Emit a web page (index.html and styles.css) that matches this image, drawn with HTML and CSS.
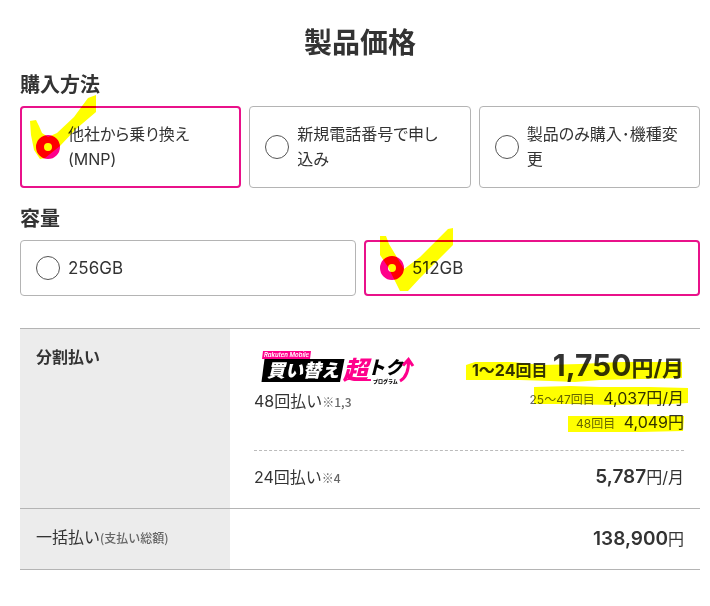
FILE: index.html
```html
<!DOCTYPE html>
<html lang="ja">
<head>
<meta charset="utf-8">
<meta name="viewport" content="width=device-width, initial-scale=1">
<title>製品価格</title>
<link rel="stylesheet" href="styles.css">
</head>
<body>
<main class="page">
  <h1 class="title">製品価格</h1>

  <fieldset class="group">
    <legend class="group-title">購入方法</legend>
    <div class="options">
      <label class="option">
        <input class="radio" type="radio" name="method" checked>
        <span class="option-text">他社から乗り換え<wbr>(MNP)</span>
        <svg class="check" viewBox="20 90 84 80" width="84" height="80" aria-hidden="true"><path d="M30 121 L36 120 L39 126 L42 133 L48 137 L57 133 L74 117 L88 98 L96 95 V112 L76 129 L60 146 L45 158 L40 159 L34 150 L31 135Z"/></svg>
      </label>
      <label class="option">
        <input class="radio" type="radio" name="method">
        <span class="option-text">新規電話番号で申し込み</span>
      </label>
      <label class="option">
        <input class="radio" type="radio" name="method">
        <span class="option-text">製品のみ購入･機種変更</span>
      </label>
    </div>
  </fieldset>

  <fieldset class="group">
    <legend class="group-title">容量</legend>
    <div class="options capacity">
      <label class="option">
        <input class="radio" type="radio" name="capacity">
        <span class="option-text">256GB</span>
      </label>
      <label class="option">
        <input class="radio" type="radio" name="capacity" checked>
        <span class="option-text">512GB</span>
        <svg class="check" viewBox="364 224 96 72" width="96" height="72" aria-hidden="true"><path d="M380 236 H386 L389 244 L395 254 L404 269 L420 257 L436 241 L448 229 L453 228 V245 L437 261 L420 278 L408 291 H400 L394 279 L388 267 L380 255Z"/></svg>
      </label>
    </div>
  </fieldset>

  <table class="prices">
    <tbody>
      <tr>
        <th class="plan" scope="row">分割払い</th>
        <td class="detail">
          <div class="installment">
            <div class="name">
              <svg class="logo" viewBox="256 348 164 36" width="164" height="36" role="img" aria-label="Rakuten Mobile 買い替え超トクプログラム">
                <path fill="#ff008c" d="M263 351h48l-1 8h-48z"/>
                <path fill="#000" d="M264.500 359H344.500L340 382H261.500Z"/>
                <text class="logo-brand" x="264" y="357">Rakuten Mobile</text>
                <text class="logo-main" x="267" y="377">買い替え</text>
                <text class="logo-super" x="343" y="379">超</text>
                <path class="logo-swoosh" d="M344 381Q349 377 355 380H371"/>
                <text class="logo-toku" x="367" y="374">トク</text>
                <text class="logo-program" x="373" y="383">プログラム</text>
                <path class="logo-arrow" d="M400 381Q409 376 408.500 360M403 365.500L408.500 359.500L413 366"/>
              </svg>
              <p class="term">48回払い<small class="note">※1,3</small></p>
            </div>
            <div class="amounts">
              <p class="amount-main"><span class="period-main">1〜24回目</span> <strong class="big">1,750</strong>円/月</p>
              <p class="amount"><span class="period">25〜47回目</span> 4,037円/月</p>
              <p class="amount"><span class="period">48回目</span> 4,049円</p>
              <svg class="marker" viewBox="464 346 224 88" width="224" height="88" aria-hidden="true">
                <path d="M466 365L475 362H496L512 362L542 365L580 364L620 362H682V378L640 379L600 380L575 382L550 381L520 380H466Z"/>
                <path d="M534 387L570 386L600 387L650 387L688 388V403L670 404L610 405L570 404H534Z"/>
                <path d="M568 416H684L683 431L640 432H568Z"/>
              </svg>
            </div>
          </div>
          <div class="installment-second">
            <p class="term">24回払い<small class="note">※4</small></p>
            <p class="total"><strong>5,787</strong>円/月</p>
          </div>
        </td>
      </tr>
      <tr>
        <th class="plan lump" scope="row">一括払い<small class="note">(支払い総額)</small></th>
        <td class="detail lump-detail"><p class="total"><strong>138,900</strong>円</p></td>
      </tr>
    </tbody>
  </table>
</main>
</body>
</html>
```
FILE: styles.css
```css
* {
  box-sizing: border-box;
}

body {
  margin: 0;
  background: #fff;
  color: #333;
  font: 16px/24px Inter, "Noto Sans CJK JP", sans-serif;
}

p {
  margin: 0;
}

.page {
  padding: 25px 10px 24px 20px;
}

.title {
  margin: 0 0 12px;
  font-size: 28px;
  line-height: 36px;
  text-align: center;
}

.group {
  min-width: 0;
  margin: 0 0 19px;
  padding: 0;
  border: 0;
}

.group-title {
  padding: 0 0 9px;
  font-size: 20px;
  font-weight: 700;
  line-height: 24px;
}

.options {
  display: flex;
  gap: 8px;
}

.option {
  position: relative;
  display: flex;
  flex: 1 1 0;
  align-items: center;
  gap: 8px;
  padding: 15px 18px 15px 15px;
  border: 1px solid #b4b4b4;
  border-radius: 4px;
}

.option:has(:checked) {
  padding: 14px 17px 14px 14px;
  border: 2px solid #e9118a;
}

.option-text {
  line-height: 25px;
  font-feature-settings: "palt";
}

.capacity .option-text {
  font-size: 17px;
  line-height: 24px;
}

.radio {
  flex: none;
  appearance: none;
  width: 24px;
  height: 24px;
  margin: 0;
  border: 1px solid #555;
  border-radius: 50%;
  background: #fff;
}

.radio:checked {
  border: 8px solid #ff008c;
}

.check {
  position: absolute;
  left: -2px;
  top: -18px;
  fill: #ff0;
  mix-blend-mode: multiply;
  pointer-events: none;
}

.prices {
  width: 100%;
  margin-top: 32px;
  border-collapse: collapse;
}

.prices tr {
  border-top: 1px solid #b4b4b4;
  border-bottom: 1px solid #b4b4b4;
}

.plan {
  width: 210px;
  padding: 16px;
  background: #ececec;
  text-align: left;
  vertical-align: top;
}

.lump {
  font-weight: 400;
}

.detail {
  padding: 17px 16px 19px 24px;
}

.lump-detail {
  padding-top: 18px;
  padding-bottom: 18px;
}

.installment,
.installment-second {
  display: flex;
  justify-content: space-between;
}

.installment {
  padding-bottom: 16px;
  border-bottom: 1px dashed #bbb;
}

.installment-second {
  padding-top: 14px;
}

.logo {
  display: block;
  overflow: visible;
  margin: 2px 0 5px 2px;
}

.logo text {
  font-family: Inter, "Noto Sans CJK JP", sans-serif;
  font-style: italic;
  font-weight: 900;
}

.logo .logo-brand {
  fill: #fff;
  font-size: 6px;
  font-weight: 600;
}

.logo .logo-main {
  fill: #fff;
  font-size: 18px;
}

.logo .logo-super {
  fill: #ff008c;
  font-size: 25px;
}

.logo .logo-toku {
  fill: #000;
  font-size: 18px;
}

.logo .logo-program {
  fill: #000;
  font-size: 5px;
  font-style: normal;
}

.logo-swoosh,
.logo-arrow {
  fill: none;
  stroke: #ff008c;
  stroke-width: 3;
}

.logo-swoosh {
  stroke-width: 2;
}

.term {
  white-space: nowrap;
}

.note {
  color: #666;
  font-family: "Noto Sans CJK JP", sans-serif;
  font-size: 12px;
  font-weight: 500;
  line-height: 0;
}

.amounts {
  position: relative;
  text-align: right;
  white-space: nowrap;
}

.amount-main {
  padding-top: 4px;
  font-size: 22px;
  font-weight: 700;
  line-height: 36px;
}

.period-main {
  font-size: 16px;
  line-height: 0;
}

.big {
  font-size: 30px;
  font-weight: 700;
  line-height: 0;
}

.amount {
  font-size: 16px;
}

.period {
  margin-right: 4px;
  color: #666;
  font-size: 12px;
  line-height: 0;
}

.marker {
  position: absolute;
  top: 0;
  right: -4px;
  fill: #ff0;
  mix-blend-mode: multiply;
  pointer-events: none;
}

.total {
  text-align: right;
}

.total strong {
  font-size: 19px;
  font-weight: 600;
  line-height: 0;
}
```
